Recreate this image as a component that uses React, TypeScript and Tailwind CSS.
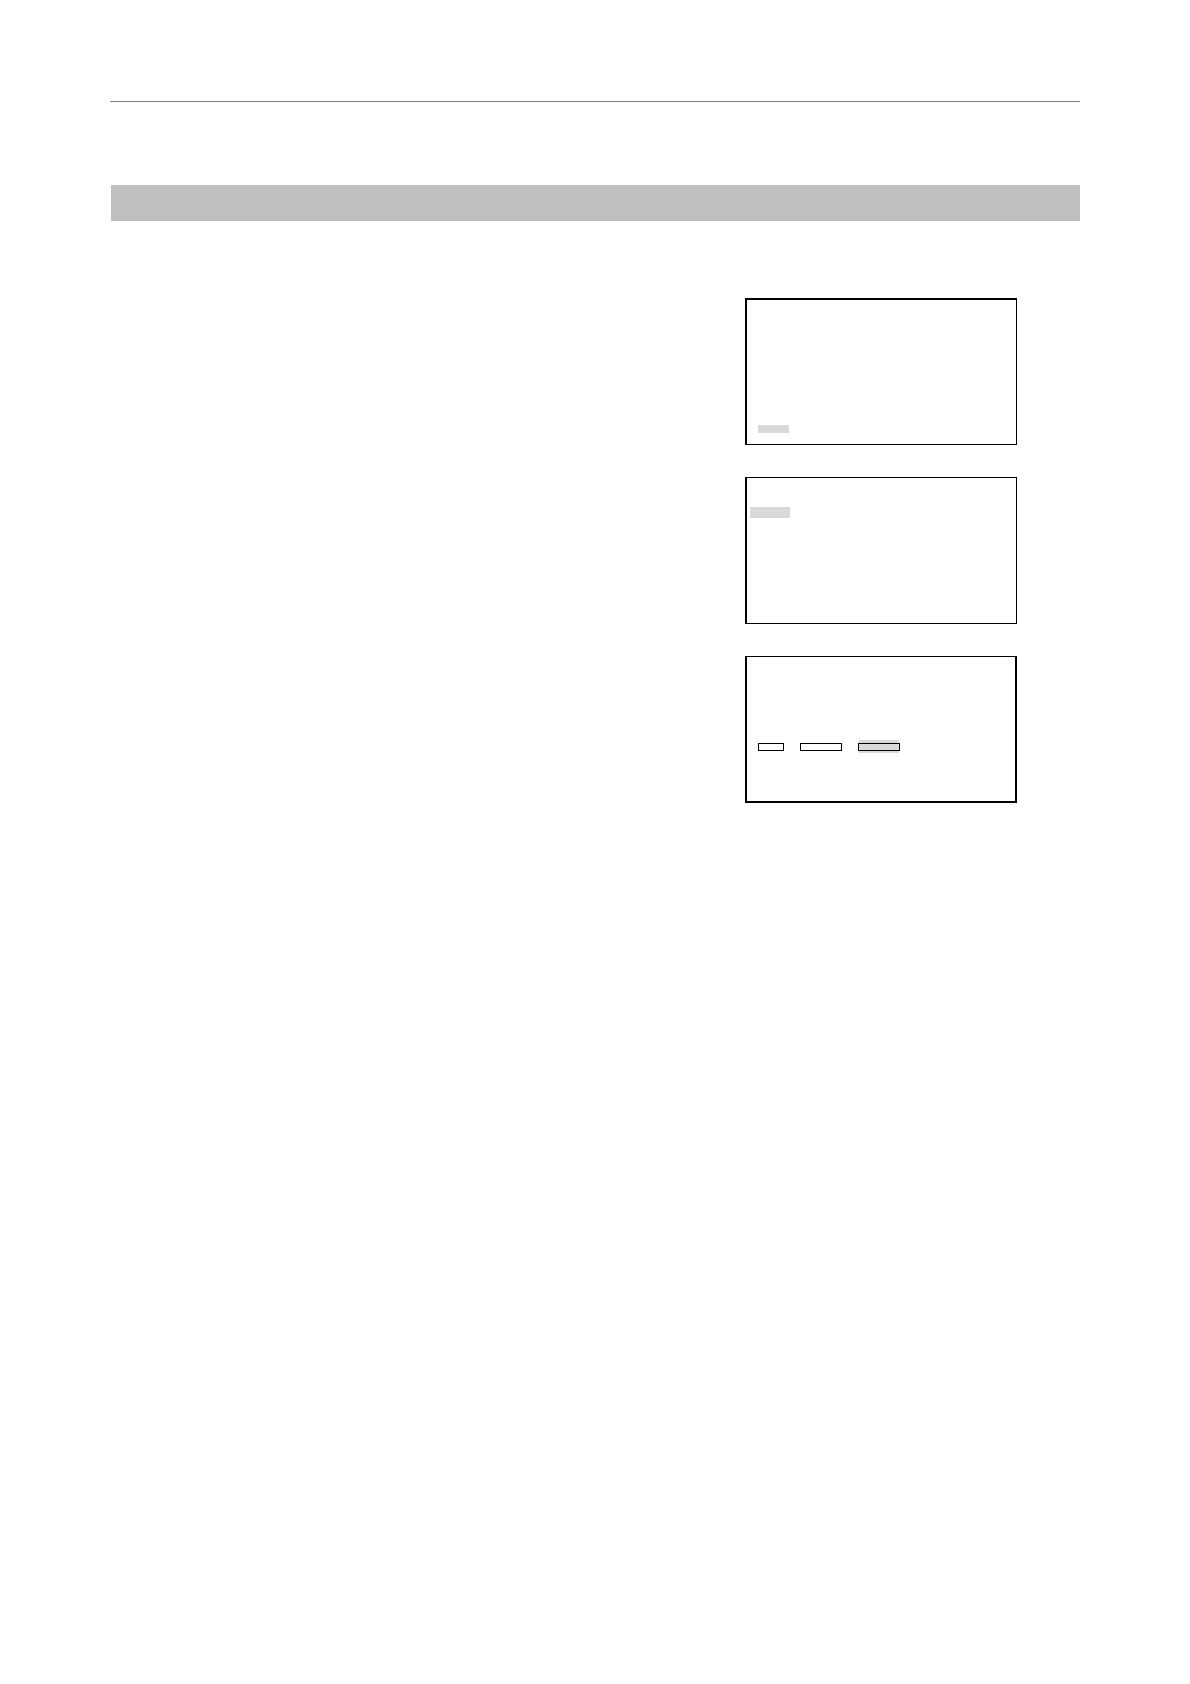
import type { ReactNode } from "react";
import clsx from "clsx";

interface ScreenProps {
  children?: ReactNode;
  className?: string;
}

function Screen({ children, className = "" }: ScreenProps) {
  return (
    <div className={clsx("h-[147px] w-full border-black border-l-2", className)}>
      {children}
    </div>
  );
}

interface KeyBoxProps {
  className?: string;
  selected?: boolean;
}

function KeyBox({ className = "", selected = false }: KeyBoxProps) {
  return (
    <div className={clsx("relative h-2 border border-black", className)}>
      {/* Highlight runs slightly taller than the outline */}
      {selected && (
        <div className="absolute inset-x-0 -top-1 -bottom-[3px] -z-10 bg-[#d9d9d9]" />
      )}
    </div>
  );
}

export default function App() {
  return (
    <div className="min-h-screen bg-white px-[110px] pt-[101px]">
      <header className="border-t border-[#808080]" />

      <main className="isolate pt-[83px]">
        {/* Section heading bar */}
        <div className="ml-px h-9 bg-[#bfbfbf]" />

        <section className="mt-[77px] mr-[63px] ml-auto flex w-[272px] flex-col gap-8">
          <Screen className="flex items-end border-t-2 border-r border-b pb-[11px] pl-[11px]">
            <div className="h-2 w-[31px] bg-[#d9d9d9]" />
          </Screen>

          <Screen className="border-t border-r border-b pt-[29px] pl-[3px]">
            <div className="h-[11px] w-10 bg-[#d9d9d9]" />
          </Screen>

          <Screen className="flex items-start gap-4 border-t border-r-2 border-b-2 pt-[86px] pl-[11px]">
            <KeyBox className="w-[26px]" />
            <KeyBox className="w-[42px]" />
            <KeyBox className="w-[42px]" selected />
          </Screen>
        </section>
      </main>
    </div>
  );
}
